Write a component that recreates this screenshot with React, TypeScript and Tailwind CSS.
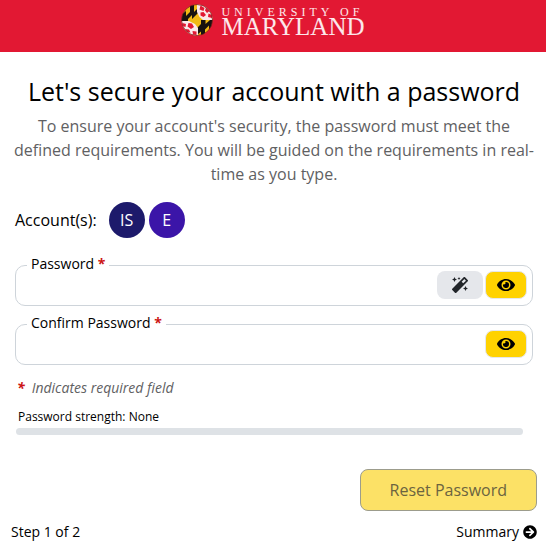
import { useState } from 'react';
import type { ReactNode } from 'react';
import { FaArrowCircleRight, FaEye, FaMagic } from 'react-icons/fa';

interface PasswordFieldProps {
  id: string;
  label: string;
  children?: ReactNode;
}

const accounts = [
  { initials: 'IS', color: 'bg-[#1d1a6b]' },
  { initials: 'E', color: 'bg-[#3b15a8]' },
];

/** Round seal of the university, quartered like the state flag. */
function Seal() {
  return (
    <svg viewBox="0 0 64 64" className="w-8 h-8" aria-hidden="true">
      <defs>
        <clipPath id="seal">
          <circle cx="32" cy="32" r="31" />
        </clipPath>
      </defs>
      <g clipPath="url(#seal)">
        <rect width="64" height="64" fill="#f0b914" />
        <path d="M0 36V22l10-8v10l8-8V2h8v14l8-8v10L22 30v-8l-8 8v6z" fill="#17120f" />
        <path d="M30 64V50l10-10v-8h9v8l9-8h6v14l-8 6v-9l-8 8v8l-8 5v-9z" fill="#17120f" />
        <path d="M32 0h16l16 14v18H44l-7-6-5-10z" fill="#fbe9ea" />
        <path d="M0 34h16l12 6 6 8v16H16L0 50z" fill="#fbe9ea" />
        <path d="M39 3l8 5-2 6-8-3zM50 7l7 7-5 4-4-5zM39 17l6-1 5 6-5 4-6-3zM55 19l7 3v6l-8-2z" fill="#e21833" />
        <path d="M3 38l7 2-1 6-7-2zM15 38l7 1 4 7-6 4-7-5zM8 50l8 1 3 6-7-1zM23 54l8 1v7l-7-1z" fill="#e21833" />
      </g>
      <circle cx="32" cy="32" r="31" fill="none" stroke="#7c1420" strokeWidth="1.5" />
    </svg>
  );
}

function Header() {
  return (
    <header className="bg-[#e21833] h-13 flex justify-center items-start pt-1">
      <div className="flex items-start gap-2">
        <Seal />
        <div className="font-['Liberation_Serif',serif] text-white/90">
          <div className="text-xs leading-4 tracking-[4px]">UNIVERSITY OF</div>
          <div className="text-[25px] leading-[14px]">MARYLAND</div>
        </div>
      </div>
    </header>
  );
}

function RequiredMark() {
  return <span className="font-bold text-[#cc1414]">*</span>;
}

function PasswordField({ id, label, children }: PasswordFieldProps) {
  const [visible, setVisible] = useState(false);

  return (
    <div className="relative flex items-start gap-0.5 h-[41px] pt-[5px] pr-[5px] border border-[#ced4da] rounded-[10px]">
      <label htmlFor={id} className="absolute -top-3 left-[11px] px-1 bg-white text-sm leading-5">
        {label} <RequiredMark />
      </label>
      <input
        id={id}
        type={visible ? 'text' : 'password'}
        required
        className="flex-1 min-w-0 h-7 pl-4 bg-transparent outline-none"
      />
      {children}
      <button
        type="button"
        aria-label={`Show ${label}`}
        onClick={() => setVisible(!visible)}
        className="flex items-center justify-center w-[42px] h-7 rounded-lg bg-[#ffd200] border border-[#e5e7eb]"
      >
        <FaEye className="w-[18px] h-4" />
      </button>
    </div>
  );
}

export default function App() {
  return (
    <div className="bg-white text-black font-['Open_Sans',sans-serif]">
      <Header />

      <main>
        <div className="pl-3.5 pr-3 pt-[23px] text-center">
          <h1 className="text-[25px] leading-8">Let's secure your account with a password</h1>
          <p className="mt-[7px] text-base leading-6 text-[#5f6163]">
            To ensure your account's security, the password must meet the defined requirements. You will be guided on
            the requirements in real-time as you type.
          </p>
        </div>

        <form onSubmit={(e) => e.preventDefault()}>
          {/* Accounts */}
          <div className="flex items-center gap-1 pl-[15px] mt-4">
            <span className="mr-2">Account(s):</span>
            {accounts.map((account) => (
              <span
                key={account.initials}
                className={`flex items-center justify-center w-9 h-9 rounded-full text-white ${account.color}`}
              >
                {account.initials}
              </span>
            ))}
          </div>

          {/* Password fields */}
          <div className="flex flex-col gap-[18px] mt-[27px] ml-[15px] mr-[13px]">
            <PasswordField id="password" label="Password">
              <button
                type="button"
                aria-label="Generate password"
                className="flex items-center justify-center w-[46px] h-7 rounded-lg bg-[#e5e7eb] text-[#212529]"
              >
                <FaMagic className="w-4 h-4" />
              </button>
            </PasswordField>
            <PasswordField id="confirm-password" label="Confirm Password" />
          </div>

          <p className="flex gap-[7px] mt-[11px] ml-[17px] text-sm leading-6 italic text-[#5f6163]">
            <RequiredMark />
            Indicates required field
          </p>

          {/* Strength meter */}
          <div className="mt-[7px] ml-4 mr-[23px]">
            <p className="pl-0.5 text-xs leading-5">Password strength: None</p>
            <div className="mt-px h-[7px] rounded-sm bg-[#dee2e6]" />
          </div>

          <div className="flex justify-end mt-[34px] pr-[9px]">
            <button
              type="submit"
              disabled
              className="h-[42px] px-[29px] rounded-lg border border-[#9c9c8c] bg-[#fce166] text-[#6b6440]"
            >
              Reset Password
            </button>
          </div>
        </form>
      </main>

      <footer className="flex items-center justify-between mt-[11px] pl-[11px] pr-[9px] text-sm leading-5">
        <span>Step 1 of 2</span>
        <button type="button" className="flex items-center gap-1">
          Summary <FaArrowCircleRight className="w-3.5 h-3.5" />
        </button>
      </footer>
    </div>
  );
}
